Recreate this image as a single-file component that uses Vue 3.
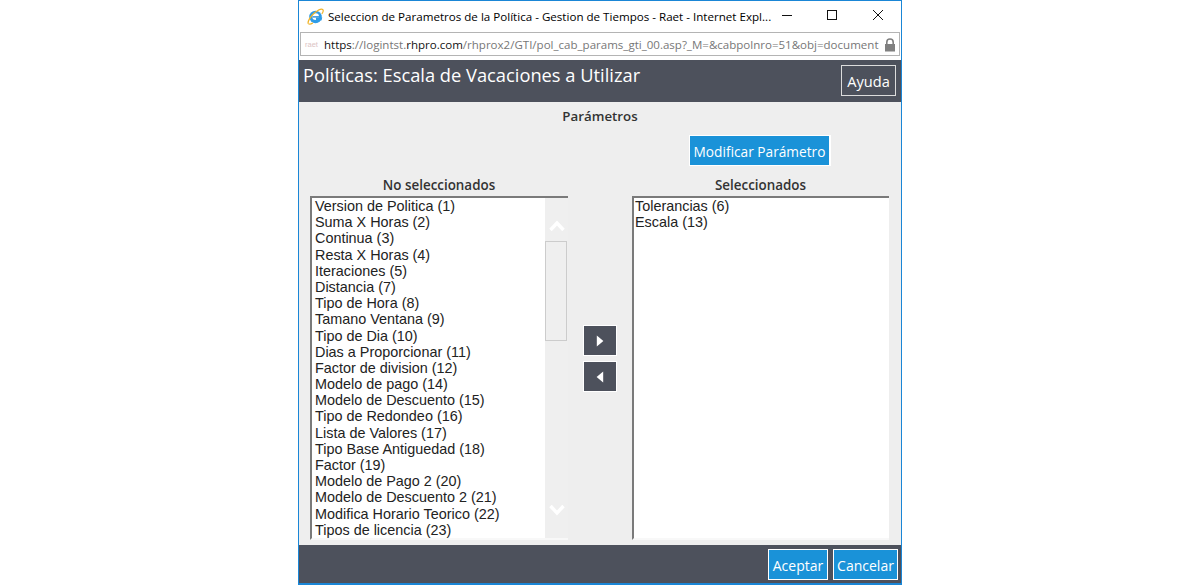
<template>
  <div class="page">
    <div class="window">
      <div class="titlebar">
        <svg class="ie-icon" viewBox="0 0 20 20">
          <circle cx="10" cy="10.5" r="7.4" fill="#2f9ce6" />
          <circle cx="10.2" cy="10.2" r="3.9" fill="#fff" />
          <rect x="6.4" y="9.6" width="8" height="1.7" fill="#2f8fd8" />
          <path d="M10.5 11.3H18L17 14.6H10.5z" fill="#2f9ce6" />
          <path d="M11 14.2c-1 .3-2 .2-2.8-.2l-.6 2 3.4.4z" fill="#2f9ce6" />
          <path d="M1.6 18.4C.2 16.4 4.2 9.6 8.4 6.2c4.6-3.8 9-5.6 10.2-4.2 1 1.2-.1 3.6-1.2 5" fill="none" stroke="#f0b429" stroke-width="1.5" />
          <path d="M1.6 18.4c1.2 1.2 3.6.3 5.2-.9" fill="none" stroke="#f0b429" stroke-width="1.5" />
        </svg>
        <span class="window-title">Seleccion de Parametros de la Política - Gestion de Tiempos - Raet - Internet Expl...</span>
        <div class="window-controls">
          <svg viewBox="0 0 46 32"><line x1="19" y1="14.5" x2="29" y2="14.5" stroke="#111" /></svg>
          <svg viewBox="0 0 46 32"><rect x="18.5" y="9.5" width="9" height="9" fill="none" stroke="#111" /></svg>
          <svg viewBox="0 0 46 32"><path d="M18 9l10 10M28 9L18 19" stroke="#111" fill="none" /></svg>
        </div>
      </div>
      <div class="urlbar">
        <span class="site-mark">raet</span>
        <span class="url"><b>https</b>://logintst.<b>rhpro.com</b>/rhprox2/GTI/pol_cab_params_gti_00.asp?_M=&amp;cabpolnro=51&amp;obj=document</span>
        <svg class="lock" viewBox="0 0 12 14">
          <path d="M2.8 6V4.2a3.2 3.2 0 0 1 6.4 0V6" fill="none" stroke="#808080" stroke-width="1.6" />
          <rect x="1" y="6" width="10" height="7.5" fill="#808080" />
        </svg>
      </div>
      <header class="header">
        <h1>Políticas: Escala de Vacaciones a Utilizar</h1>
        <button class="help-btn">Ayuda</button>
      </header>
      <main class="content">
        <div class="section-title">Parámetros</div>
        <div class="modify-row">
          <button class="blue-btn modify-btn">Modificar Parámetro</button>
        </div>
        <div class="lists">
          <div class="list-col left-col">
            <div class="list-label">No seleccionados</div>
            <div class="listbox">
              <div class="options">
                <div v-for="item in available" :key="item" class="option">{{ item }}</div>
              </div>
              <div class="scrollbar">
                <svg class="chevron chevron-up" viewBox="0 0 16 12"><polyline points="1.5,10 8,3 14.5,10" /></svg>
                <div class="thumb"></div>
                <svg class="chevron chevron-down" viewBox="0 0 16 12"><polyline points="1.5,2 8,9 14.5,2" /></svg>
              </div>
            </div>
          </div>
          <div class="move-col">
            <button class="move-btn"><svg viewBox="0 0 8 12"><path d="M.8.5 7.4 6 .8 11.5z" /></svg></button>
            <button class="move-btn"><svg viewBox="0 0 8 12"><path d="M7.2.5.6 6l6.6 5.5z" /></svg></button>
          </div>
          <div class="list-col right-col">
            <div class="list-label">Seleccionados</div>
            <div class="listbox">
              <div class="options">
                <div v-for="item in selected" :key="item" class="option">{{ item }}</div>
              </div>
            </div>
          </div>
        </div>
      </main>
      <footer class="footer">
        <button class="blue-btn accept-btn">Aceptar</button>
        <button class="blue-btn cancel-btn">Cancelar</button>
      </footer>
    </div>
  </div>
</template>

<script setup>
const available = [
  'Version de Politica (1)',
  'Suma X Horas (2)',
  'Continua (3)',
  'Resta X Horas (4)',
  'Iteraciones (5)',
  'Distancia (7)',
  'Tipo de Hora (8)',
  'Tamano Ventana (9)',
  'Tipo de Dia (10)',
  'Dias a Proporcionar (11)',
  'Factor de division (12)',
  'Modelo de pago (14)',
  'Modelo de Descuento (15)',
  'Tipo de Redondeo (16)',
  'Lista de Valores (17)',
  'Tipo Base Antiguedad (18)',
  'Factor (19)',
  'Modelo de Pago 2 (20)',
  'Modelo de Descuento 2 (21)',
  'Modifica Horario Teorico (22)',
  'Tipos de licencia (23)'
]

const selected = ['Tolerancias (6)', 'Escala (13)']
</script>

<style>
html,
body {
  margin: 0;
  background: #fff;
}
</style>

<style scoped>
.page {
  width: 1200px;
  height: 585px;
  display: flex;
  justify-content: center;
  overflow: hidden;
  font-family: "Open Sans", "Noto Sans", sans-serif;
}

.window {
  width: 604px;
  height: 585px;
  box-sizing: border-box;
  border: 1px solid #1a86d6;
  border-bottom-width: 2px;
  display: flex;
  flex-direction: column;
  background: #fff;
}

.titlebar {
  height: 31px;
  display: flex;
  align-items: center;
  padding-left: 8px;
  flex-shrink: 0;
}

.ie-icon {
  width: 17px;
  height: 17px;
  margin-right: 4px;
  flex-shrink: 0;
}

.window-title {
  font-size: 11.6px;
  color: #000;
  white-space: nowrap;
  flex: 1;
  min-width: 0;
}

.window-controls {
  display: flex;
  flex-shrink: 0;
}

.window-controls svg {
  width: 46px;
  height: 32px;
}

.urlbar {
  height: 24px;
  box-sizing: border-box;
  margin: 0 1px 4px;
  border: 1px solid #b4b4b4;
  display: flex;
  align-items: center;
  padding: 1px 3px 0 4px;
  flex-shrink: 0;
}

.site-mark {
  width: 19px;
  flex-shrink: 0;
  font-size: 7.5px;
  color: #dcc4c4;
  font-family: "Liberation Sans", sans-serif;
}

.url {
  flex: 1;
  min-width: 0;
  overflow: hidden;
  white-space: nowrap;
  font-size: 11.54px;
  color: #777;
}

.url b {
  font-weight: 400;
  color: #111;
}

.lock {
  width: 12px;
  height: 14px;
  margin-left: 4px;
  flex-shrink: 0;
}

.header {
  height: 42px;
  flex-shrink: 0;
  background: #4d515c;
  display: flex;
  justify-content: space-between;
  padding: 0 5px 0 4px;
}

.header h1 {
  margin: 3px 0 0;
  font-size: 18.3px;
  line-height: 24px;
  font-weight: 400;
  color: #fff;
}

.help-btn {
  align-self: flex-start;
  margin-top: 5px;
  width: 55px;
  height: 31px;
  padding: 0;
  background: #4d515c;
  border: 1px solid #dcdcdc;
  color: #fff;
  font-family: inherit;
  font-size: 14.6px;
}

.content {
  flex: 1;
  min-height: 0;
  background: #eee;
  display: flex;
  flex-direction: column;
  overflow: hidden;
}

.section-title {
  margin-top: 5px;
  text-align: center;
  font-size: 13.3px;
  line-height: 18px;
  font-weight: 600;
  color: #333;
}

.modify-row {
  margin-top: 10px;
  padding-left: 390px;
  display: flex;
}

.blue-btn {
  height: 31px;
  padding: 2px 0 0;
  background: #1a92d8;
  border: 1px solid #fff;
  color: #fff;
  font-family: inherit;
  font-size: 14px;
  white-space: nowrap;
}

.modify-btn {
  width: 142px;
  font-size: 13.7px;
  border-right-width: 2px;
}

.accept-btn {
  width: 60px;
}

.cancel-btn {
  width: 65px;
}

.lists {
  margin-top: 10px;
  padding-left: 11px;
  display: flex;
  align-items: flex-start;
}

.list-col {
  display: flex;
  flex-direction: column;
}

.left-col {
  width: 258px;
}

.right-col {
  width: 257px;
}

.list-label {
  text-align: center;
  font-size: 13.4px;
  line-height: 18px;
  padding-bottom: 2px;
  font-weight: 600;
  color: #333;
}

.listbox {
  height: 344px;
  box-sizing: border-box;
  border-top: 2px solid #7a7a7a;
  border-left: 2px solid #7a7a7a;
  border-bottom: 2px solid #f8f8f8;
  display: flex;
  background: #fff;
}

.options {
  flex: 1;
  padding: 0 0 0 3px;
  overflow: hidden;
}

.right-col .options {
  padding-left: 1px;
}

.option {
  height: 16.2px;
  line-height: 16.2px;
  font-family: "Liberation Sans", Arial, sans-serif;
  font-size: 14.4px;
  color: #222;
  white-space: nowrap;
}

.scrollbar {
  width: 23px;
  flex-shrink: 0;
  background: #efefef;
  position: relative;
}

.thumb {
  position: absolute;
  top: 43px;
  left: 0;
  right: 1px;
  height: 100px;
  box-sizing: border-box;
  border: 1px solid #ccc;
}

.chevron {
  position: absolute;
  left: 4px;
  width: 16px;
  height: 12px;
  fill: none;
  stroke: #fff;
  stroke-width: 3.4;
}

.chevron-up {
  top: 22px;
}

.chevron-down {
  bottom: 22px;
}

.move-col {
  width: 64px;
  box-sizing: border-box;
  display: flex;
  flex-direction: column;
  gap: 5px;
  padding: 149px 0 0 15px;
  flex-shrink: 0;
}

.move-btn {
  width: 34px;
  height: 31px;
  padding: 0;
  background: #4d515c;
  border: 1px solid #fff;
  display: flex;
  align-items: center;
  justify-content: center;
}

.move-btn svg {
  width: 8px;
  height: 12px;
  fill: #fff;
}

.footer {
  height: 38px;
  box-sizing: border-box;
  flex-shrink: 0;
  background: #4d515c;
  display: flex;
  justify-content: flex-end;
  align-items: center;
  gap: 5px;
  padding: 1px 3px 0 0;
}
</style>
